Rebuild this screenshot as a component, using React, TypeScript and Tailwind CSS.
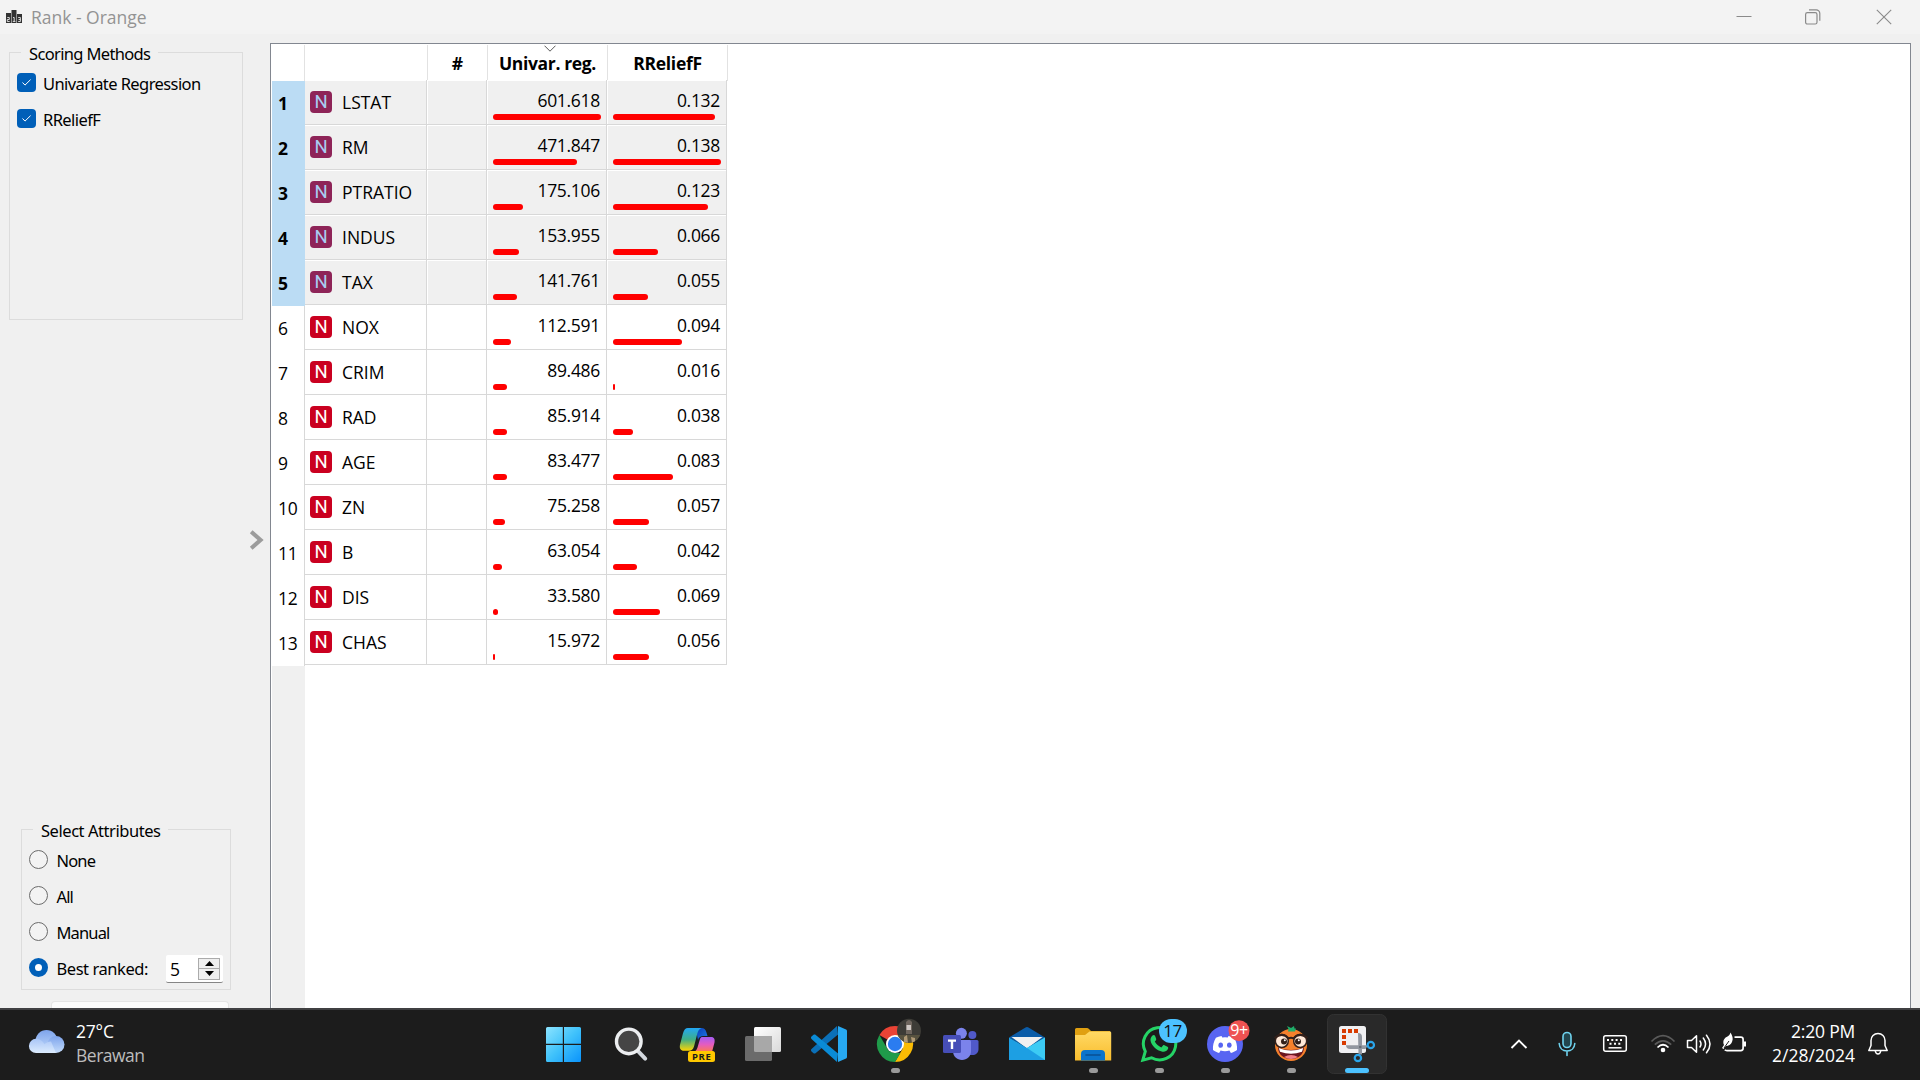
import React from "react";

type Row = { name: string; uni: string; uniBar: number; rel: string; relBar: number };

const rows: Row[] = [
  { name: "LSTAT", uni: "601.618", uniBar: 108, rel: "0.132", relBar: 102 },
  { name: "RM", uni: "471.847", uniBar: 84, rel: "0.138", relBar: 108 },
  { name: "PTRATIO", uni: "175.106", uniBar: 30, rel: "0.123", relBar: 94.5 },
  { name: "INDUS", uni: "153.955", uniBar: 25.5, rel: "0.066", relBar: 45 },
  { name: "TAX", uni: "141.761", uniBar: 24, rel: "0.055", relBar: 34.5 },
  { name: "NOX", uni: "112.591", uniBar: 18, rel: "0.094", relBar: 69 },
  { name: "CRIM", uni: "89.486", uniBar: 13.5, rel: "0.016", relBar: 2 },
  { name: "RAD", uni: "85.914", uniBar: 13.5, rel: "0.038", relBar: 19.5 },
  { name: "AGE", uni: "83.477", uniBar: 13.5, rel: "0.083", relBar: 60 },
  { name: "ZN", uni: "75.258", uniBar: 12, rel: "0.057", relBar: 36 },
  { name: "B", uni: "63.054", uniBar: 9, rel: "0.042", relBar: 24 },
  { name: "DIS", uni: "33.580", uniBar: 4.5, rel: "0.069", relBar: 46.5 },
  { name: "CHAS", uni: "15.972", uniBar: 2, rel: "0.056", relBar: 36 },
];

const SELECTED = 5;

function TitleBar() {
  return (
    <header className="flex h-[34px] shrink-0 items-center bg-[#f3f3f3] pl-[6px]">
      <svg width="16" height="14" viewBox="0 0 16 14" className="mt-[-1px]">
        <path d="M0 3h5v10H0zM5.5 0h5v13h-5zM11 4h5v9h-5z" fill="#333" />
        <g fill="none" stroke="#e8e8e8" strokeWidth="0.9">
          <path d="M1.3 7.5h2v2h-2v2h2.4M7 7.5h1.2v4M6.8 11.4h2.6M12.2 7.5h2.2v4h-2.2M12.6 9.5h1.8" />
        </g>
      </svg>
      <h1 className="ml-[9px] text-[17.5px] leading-6 tracking-[-0.02px] text-[#939393]">Rank - Orange</h1>
      <div className="ml-auto flex items-center pr-[28px] text-[#8a8a8a]">
        <svg width="16" height="16" viewBox="0 0 16 16" fill="none" stroke="currentColor">
          <path d="M0.5 7.5h15" />
        </svg>
        <svg width="16" height="16" viewBox="0 0 16 16" fill="none" stroke="currentColor" strokeWidth="1.2" className="ml-[53px]">
          <rect x="0.6" y="3.6" width="11.4" height="11.4" rx="1.8" />
          <path d="M4 0.8h7.2a3.6 3.6 0 0 1 3.6 3.6v7.4" />
        </svg>
        <svg width="16" height="16" viewBox="0 0 16 16" fill="none" stroke="currentColor" strokeWidth="1.1" className="ml-[55px]">
          <path d="M0.8 0.8l14.4 14.4M15.2 0.8L0.8 15.2" />
        </svg>
      </div>
    </header>
  );
}

function Check({ label }: { label: string }) {
  return (
    <label className="flex h-9 items-center">
      <span className="mt-[-3px] flex size-[19px] items-center justify-center rounded-[4px] bg-[#005fb8]">
        <svg width="9" height="7" viewBox="0 0 9 7" fill="none" stroke="#fff" strokeWidth="1">
          <path d="M0.5 3.5l2.5 2.6L8.6 0.6" />
        </svg>
      </span>
      <span className="ml-[7px] tracking-[-0.58px]">{label}</span>
    </label>
  );
}

function Radio({ label, on }: { label: string; on?: boolean }) {
  return (
    <label className="flex h-9 items-center">
      {on ? (
        <span className="mt-[-3px] size-[19px] rounded-full border-[6px] border-[#005fb8] bg-white" />
      ) : (
        <span className="mt-[-3px] size-[19px] rounded-full border border-[#6b6b6b] bg-[#f3f3f3]" />
      )}
      <span className={"ml-[8.5px] " + (on ? "tracking-[-0.45px]" : "tracking-[-0.85px]")}>{label}</span>
    </label>
  );
}

function SpinBox() {
  return (
    <div className="ml-auto mr-[7px] mt-[4px] flex h-[28px] w-[57px] items-center rounded-[2px] border-b border-[#868686] bg-white pl-[4px] pr-[3px]">
      <span className="text-[17.5px] leading-6 [font-family:'Open_Sans',sans-serif]">5</span>
      <div className="ml-auto flex h-[22px] w-[22px] flex-col border border-[#ababab] bg-[#efefef]">
        <span className="flex flex-1 items-center justify-center border-b border-[#ababab]">
          <svg width="9" height="5" viewBox="0 0 9 5"><path d="M4.5 0L9 5H0z" /></svg>
        </span>
        <span className="flex flex-1 items-center justify-center">
          <svg width="9" height="5" viewBox="0 0 9 5"><path d="M4.5 5L9 0H0z" /></svg>
        </span>
      </div>
    </div>
  );
}

function Sidebar() {
  return (
    <aside className="flex w-[270px] shrink-0 text-[16.5px] leading-6 tracking-[-0.35px] text-black [font-family:'Noto_Sans',sans-serif]">
      <div className="flex w-[243px] flex-col">
        <fieldset className="ml-[9px] mt-[6px] h-[280px] w-[234px] border border-[#dcdcdc] pl-[7px]">
          <legend className="ml-[4px] h-6 px-2 pt-[2px] tracking-[-0.65px]">Scoring Methods</legend>
          <div className="mt-[2px]">
            <Check label="Univariate Regression" />
            <Check label="RReliefF" />
          </div>
        </fieldset>
        <fieldset className="ml-[21px] mt-[497px] h-[173px] w-[210px] border border-[#dcdcdc] pl-[7px]">
          <legend className="ml-[4px] h-6 px-2 pt-[2px] tracking-[-0.45px]">Select Attributes</legend>
          <div className="mt-[2px]">
            <Radio label="None" />
            <Radio label="All" />
            <Radio label="Manual" />
            <div className="flex">
              <Radio label="Best ranked:" on />
              <SpinBox />
            </div>
          </div>
        </fieldset>
        <div className="ml-[51px] mt-[11px] h-[7px] w-[178px] rounded-t-[4px] border border-b-0 border-[#e4e4e4] bg-[#fbfbfb]" />
      </div>
      <div className="flex flex-1 items-center justify-center pt-[37px]">
        <svg width="16" height="20" viewBox="0 0 16 20" fill="none" stroke="#9c9c9c" strokeWidth="4" className="ml-[1px]">
          <path d="M2.2 1.8L11.6 10 2.2 18.2" />
        </svg>
      </div>
    </aside>
  );
}

function ScoreCell({ value, bar, selected }: { value: string; bar: number; selected: boolean }) {
  return (
    <div
      className={
        "flex w-[120px] flex-col justify-end border-r border-b border-[#d8d8d8] pb-[3px] pl-[6px] pr-[6px] " +
        (selected ? "shadow-[inset_1px_1px_0_#fff]" : "")
      }
    >
      <span className="mb-[2px] text-right leading-6 tracking-[-0.3px]">{value}</span>
      <span className="mb-[1px] h-[6px] rounded-[3px] bg-[#ff0000]" style={{ width: bar }} />
    </div>
  );
}

function TableRow({ row, index }: { row: Row; index: number }) {
  const selected = index < SELECTED;
  return (
    <div className="flex h-[45px]">
      <div
        className={
          "flex w-[33px] items-center pb-px pl-[6px] " +
          (selected
            ? "bg-[#bbdcf4] font-bold"
            : "border-r border-[#d8d8d8] bg-white tracking-[-0.3px]")
        }
      >
        {index + 1}
      </div>
      <div className={"-mt-px flex h-[45px] " + (selected ? "bg-[#f0f0f0]" : "bg-white")}>
        <div
          className={
            "flex w-[122px] items-center border-r border-b border-[#d8d8d8] pl-[5px] " +
            (selected ? "shadow-[inset_0_1px_0_#fff]" : "")
          }
        >
          <span
            className={
              "flex size-[22px] items-center justify-center rounded-[4px] pt-px text-[18.5px] leading-none [font-family:Roboto,sans-serif] " +
              (selected ? "bg-[#8e2458] text-[#a9cdf3]" : "bg-[#ca0020] text-white")
            }
          >
            N
          </span>
          <span className="ml-[10px]">{row.name}</span>
        </div>
        <div
          className={
            "w-[60px] border-r border-b border-[#d8d8d8] " + (selected ? "shadow-[inset_1px_1px_0_#fff]" : "")
          }
        />
        <ScoreCell value={row.uni} bar={row.uniBar} selected={selected} />
        <ScoreCell value={row.rel} bar={row.relBar} selected={selected} />
      </div>
    </div>
  );
}

function RankTable() {
  return (
    <main className="mr-[9px] mt-[9px] flex flex-1 flex-col overflow-hidden border border-b-0 border-[#828790] bg-white pl-px text-[17.5px] leading-6 text-black">
      <div className="flex h-[37px] shrink-0 pt-px font-bold">
        <div className="w-[33px] border-r border-[#e2e2e2]" />
        <div className="w-[123px] border-r border-[#e2e2e2]" />
        <div className="flex w-[60px] items-center justify-center border-r border-[#e2e2e2]">#</div>
        <div className="flex w-[120px] flex-col items-center border-r border-[#e2e2e2]">
          <svg width="12" height="7" viewBox="0 0 12 7" fill="none" stroke="#5a5a5a" strokeWidth="1" className="-mb-px ml-[4px]">
            <path d="M0.5 0.7L6 6.2 11.5 0.7" />
          </svg>
          <span className="tracking-[-0.35px]">Univar. reg.</span>
        </div>
        <div className="flex w-[120px] items-center justify-center border-r border-[#e2e2e2] tracking-[-0.3px]">
          RReliefF
        </div>
      </div>
      <div className="shrink-0">
        {rows.map((r, i) => (
          <TableRow key={r.name} row={r} index={i} />
        ))}
      </div>
      <div className="w-[33px] flex-1 bg-[#f0f0f0]" />
    </main>
  );
}

function AppTile({ children, running, active }: { children: React.ReactNode; running?: boolean; active?: boolean }) {
  return (
    <svg width="66" height="70" viewBox="0 0 66 70" className="shrink-0 overflow-visible">
      {active && <rect x="4.5" y="4.5" width="59" height="59" rx="6" fill="#292929" stroke="#323232" />}
      {children}
      {running && <rect x="30" y="58" width="9" height="5" rx="2.5" fill="#9a9a9a" />}
      {active && <rect x="22" y="58" width="24" height="5" rx="2.5" fill="#4cc2ff" />}
    </svg>
  );
}

function Gradient({ id, from, to, mid, v }: { id: string; from: string; to: string; mid?: string; v?: boolean }) {
  return (
    <linearGradient id={id} x1="0" y1="0" x2={v ? "0" : "1"} y2="1">
      <stop offset="0" stopColor={from} />
      {mid && <stop offset="0.5" stopColor={mid} />}
      <stop offset="1" stopColor={to} />
    </linearGradient>
  );
}

function AppIcons() {
  return (
    <div className="flex">
      <AppTile>
        <defs>
          <linearGradient id="win" gradientUnits="userSpaceOnUse" x1="15" y1="17" x2="50" y2="52">
            <stop offset="0" stopColor="#8ce4ff" />
            <stop offset="0.5" stopColor="#40c2fb" />
            <stop offset="1" stopColor="#0a93fb" />
          </linearGradient>
        </defs>
        <path
          fill="url(#win)"
          d="M16.5 17H31.8V33.8H15V18.5Q15 17 16.5 17zM33 17H48.5Q50 17 50 18.5V33.8H33zM15 35H31.8V52H16.5Q15 52 15 50.5zM33 35H50V50.5Q50 52 48.5 52H33z"
        />
      </AppTile>
      <AppTile>
        <path d="M40.8 40.8L48.2 48.6" stroke="#d3d8de" strokeWidth="4" strokeLinecap="round" />
        <circle cx="31.8" cy="31.4" r="12.3" fill="#454545" stroke="#eceef0" strokeWidth="3.4" />
      </AppTile>
      <AppTile>
        <defs>
          <Gradient id="cpa" from="#22a7f5" mid="#3fae86" to="#ffd500" v />
          <Gradient id="cpb" from="#a55cf5" mid="#e45cc0" to="#ff7a4c" v />
          <Gradient id="cpc" from="#0a3fb8" to="#1f7ae8" />
        </defs>
        <path fill="url(#cpc)" d="M34 18h4.500c2.500 0 4 1.500 4.800 4l1.200 4h-4c-3 0-4.500 1-5.500 4l-1-5z" />
        <path fill="url(#cpa)" d="M25 18h13.500c-2.500 1-3.500 3-4.300 6L31 36.500c-1 3-2.500 4.300-5 4.300h-5c-3.500 0-4.700-2.500-4-6l3-11.500c1-3.500 2.500-5.300 5-5.300z" />
        <path fill="url(#cpb)" d="M39.500 27h8.500c3.500 0 4 2.500 3.500 5.500L49 42H28.500c3.500 0 5-1.500 6-4.500l2.500-8.500c.5-1.500 1.300-2 2.500-2z" />
        <rect x="25" y="41" width="27" height="11" rx="2.500" fill="#ffc800" />
        <text x="38.800" y="49.900" textAnchor="middle" fontSize="9.500" fontWeight="700" letterSpacing="0.700" fill="#1a1a1a" fontFamily="Open Sans">PRE</text>
      </AppTile>
      <AppTile>
        <defs><Gradient id="tv" from="#ffffff" to="#d9d9d9" /></defs>
        <rect x="25" y="17" width="27" height="25" rx="1.500" fill="url(#tv)" />
        <rect x="16" y="26" width="27" height="25" rx="1.500" fill="#6b6b6b" />
        <path d="M25 26h18v16H26.500a1.500 1.500 0 0 1-1.500-1.500z" fill="#a8a8a8" />
      </AppTile>
      <AppTile>
        <path d="M43 24.500L20.500 43.200c-.6.500-1.400.5-2 0l-2-1.800c-.7-.7-.7-1.600 0-2.300L42 16z" fill="#0b70b8" />
        <path d="M43 43.500L20.500 24.800c-.6-.5-1.400-.5-2 0l-2 1.800c-.7.7-.7 1.600 0 2.300L42 52z" fill="#0a8bd6" />
        <path d="M43 16l7.500 3.200c1 .4 1.500 1 1.500 2v25.600c0 1-.5 1.600-1.500 2L43 52z" fill="#27a9f2" />
      </AppTile>
      <AppTile running>
        <path d="M34 34L18.400 25a18 18 0 0 1 31.200 0H34z" fill="#ea4335" />
        <path d="M34 25h15.600A18 18 0 0 1 34 52l7.800-13.500z" fill="#fbbc04" />
        <path d="M18.400 25l7.800 13.500c2 3.500 5 4.500 8 4.500h5.200L34 52A18 18 0 0 1 18.400 25z" fill="#1f9b4a" />
        <circle cx="34" cy="34" r="9" fill="#fff" />
        <circle cx="34" cy="34" r="7.200" fill="#2b7cf0" />
        <clipPath id="avatar"><circle cx="48" cy="20.800" r="12" /></clipPath>
        <g clipPath="url(#avatar)">
          <rect x="36" y="8" width="24" height="26" fill="#3d3c37" />
          <rect x="37" y="25" width="23" height="9" fill="#57523f" />
          <path d="M45 12q3-4 6 0v12h-6z" fill="#6f665e" />
          <rect x="45.500" y="15" width="4.500" height="5" fill="#cfc8c4" />
          <path d="M43 27l3-2 1 8h-4zM50 27l4 1v5h-3z" fill="#b09a76" />
        </g>
      </AppTile>
      <AppTile>
        <circle cx="45.400" cy="25" r="4" fill="#5059c9" />
        <path d="M42 30h8q1.500 0 1.500 1.500V39c0 4-3 6-6 6h-3.500z" fill="#5059c9" />
        <circle cx="34.400" cy="23.300" r="5.500" fill="#7b83eb" />
        <path d="M26 30h16.500q1.500 0 1.500 1.500V41c0 5.500-4 9-9 9s-9-3.500-9-9z" fill="#7b83eb" />
        <rect x="16" y="25" width="18" height="18" rx="1.500" fill="#464eb8" />
        <path d="M21 29.500h8v2.200h-2.800V39h-2.400v-7.300H21z" fill="#fff" />
      </AppTile>
      <AppTile>
        <path d="M16 27.500L32.500 17.500q1.500-.9 3 0L52 27.500 34 38z" fill="#0b5ca8" />
        <path d="M18.500 27h31L34 38.500z" fill="#f1f1f1" />
        <path d="M16 27.500L34 38 52 27.500V50H16z" fill="#1d9fe3" />
        <path d="M52 27.500V50L34 38z" fill="#3ccbf4" />
      </AppTile>
      <AppTile running>
        <defs><Gradient id="fold" from="#ffd965" to="#f9bd2d" v /></defs>
        <path d="M17.500 18H28q1 0 2 1l2 2H51v10H16V19.500q0-1.500 1.500-1.500z" fill="#e0a011" />
        <path d="M16 25h10l4.500-3.500H51q1.200 0 1.200 1.200V50.500H16z" fill="url(#fold)" />
        <path d="M22 50.500V44q0-4 4-4h16q4 0 4 4v6.500z" fill="#0b74cc" />
        <path d="M27 45h14" stroke="#0a4f92" strokeWidth="1.600" strokeLinecap="round" />
      </AppTile>
      <AppTile running>
        <path d="M17.800 50.200l2.500-8.800A16.200 16.200 0 1 1 26.500 47.800z" fill="none" stroke="#25d366" strokeWidth="3" />
        <path
          d="M27.500 25.500c.8-.8 2-.8 2.500.3l1.200 3c.2.600 0 1.100-.4 1.600l-1 1.200c1.500 2.800 3.600 4.700 6.500 5.900l1.700-1.900c.4-.5.900-.6 1.400-.4l3.100 1.500c.9.500.9 1.300.4 2.400-1 2.200-3.400 3-5.400 2.600-6-1.200-11.400-6.300-12-11.500-.2-1.800.7-3.500 2-4.700z"
          fill="#25d366"
        />
        <rect x="34" y="9" width="28" height="24" rx="12" fill="#4cc2ff" />
        <text x="47.500" y="27.200" textAnchor="middle" fontSize="17" letterSpacing="-0.500" fill="#111" fontFamily="Open Sans">17</text>
      </AppTile>
      <AppTile running>
        <circle cx="34" cy="34" r="18" fill="#5865f2" />
        <path
          d="M30.500 26c-2 .3-4 .9-5.600 1.700-2.300 3.800-3.300 8-2.900 12.300 2 1.500 4 2.400 6.100 3l1.500-2.400q4.400 1.200 8.800 0l1.500 2.400c2.100-.6 4.100-1.500 6.100-3 .4-4.600-.7-8.800-2.900-12.300-1.600-.8-3.600-1.400-5.600-1.700l-.8 1.500q-2.700-.4-5.400 0z"
          fill="#fff"
        />
        <ellipse cx="29.700" cy="35.200" rx="2.300" ry="2.600" fill="#5865f2" />
        <ellipse cx="38.300" cy="35.200" rx="2.300" ry="2.600" fill="#5865f2" />
        <circle cx="48" cy="20.700" r="10.500" fill="#ee5252" />
        <text x="48" y="26.300" textAnchor="middle" fontSize="16" letterSpacing="-0.500" fill="#fff" fontFamily="Open Sans">9+</text>
      </AppTile>
      <AppTile running>
        <circle cx="34" cy="35" r="16" fill="#f5812c" />
        <path d="M30 16l4 2 3-2 .5 2.500 1.500 0-1 3h-7l.5-2.500z" fill="#1fae6a" />
        <path d="M21 37.500q13 5 26 0c-.5 7.500-6 11.500-13 11.500s-12.500-4-13-11.500z" fill="#6b1620" />
        <path d="M21.800 38q12.200 5 24.400 0l-1.200 3.800q-11 4-22 0z" fill="#fff" />
        <path d="M27 47q7-4 14 0-7 4-14 0z" fill="#f2808a" />
        <circle cx="24.800" cy="31" r="6.500" fill="#ffe9d8" stroke="#33201a" strokeWidth="1.500" />
        <circle cx="43.200" cy="31" r="6.500" fill="#ffe9d8" stroke="#33201a" strokeWidth="1.500" />
        <path d="M17.500 28q8-6.500 14 .5 2.500-1.500 5 0 6-7 14-.5" fill="none" stroke="#33201a" strokeWidth="2" />
        <circle cx="27" cy="31.500" r="3" fill="#33201a" />
        <circle cx="41" cy="31.500" r="3" fill="#33201a" />
        <circle cx="27.800" cy="30.200" r="1" fill="#fff" />
        <circle cx="41.800" cy="30.200" r="1" fill="#fff" />
      </AppTile>
      <AppTile active>
        <rect x="16" y="16" width="27" height="27" rx="2.500" fill="#f0f0f2" />
        <path d="M19 19h4v4h-4zM25 19h4v4h-4zM31 19h4v4h-4zM19 25h4v4h-4zM19 31h4v4h-4z" fill="#d83b01" />
        <path d="M35 23q4 0 4 4v17.500h-3.500zM23 35.300h22l-2.500 3.700H27q-4 0-4-3.700z" fill="#9297a0" />
        <circle cx="37.300" cy="37" r="1.300" fill="#666b73" />
        <circle cx="47.800" cy="35" r="3.200" fill="none" stroke="#2aa5ea" strokeWidth="2.200" />
        <circle cx="34.900" cy="48" r="3.200" fill="none" stroke="#2aa5ea" strokeWidth="2.200" />
      </AppTile>
    </div>
  );
}

function Tray() {
  return (
    <div className="mb-[2px] ml-auto flex items-center text-white">
      <svg width="18" height="12" viewBox="0 0 18 12" fill="none" stroke="currentColor" strokeWidth="1.9">
        <path d="M1.500 10L9 2.500l7.500 7.500" />
      </svg>
      <svg width="18" height="26" viewBox="0 0 18 26" fill="none" stroke="#6fd3ee" strokeWidth="1.600" strokeLinecap="round" className="ml-[30px]">
        <rect x="5" y="1.500" width="8" height="15" rx="4" fill="#22454d" />
        <path d="M1.200 12.500c.3 4.500 3.500 7.500 7.800 7.500s7.500-3 7.800-7.500M9 20v4.500" />
      </svg>
      <svg width="26" height="20" viewBox="0 0 26 20" fill="none" stroke="currentColor" strokeWidth="1.500" className="ml-[26px]">
        <rect x="1.700" y="1.700" width="22.600" height="15.600" rx="2" />
        <path d="M5 6h2M9.300 6h2M13.600 6h2M18 6h2M7.500 9.700h2M12 9.700h2M16.300 9.700h2" strokeWidth="2" />
        <path d="M6.500 13.800h13" />
      </svg>
      <svg width="26" height="20" viewBox="0 0 26 20" fill="none" strokeWidth="1.700" className="ml-[22px]">
        <path d="M1.500 7.500Q13-4 24.500 7.500M4.800 10.700q8.200-7.800 16.400 0" stroke="#5a5a5a" />
        <path d="M7.500 13.500q5.500-5.500 11 0" stroke="#fff" />
        <circle cx="13" cy="16" r="2.300" fill="#fff" />
      </svg>
      <svg width="26" height="22" viewBox="0 0 26 22" fill="none" stroke="currentColor" strokeWidth="1.500" strokeLinejoin="round" strokeLinecap="round" className="ml-[10px]">
        <path d="M1.500 7.500h4l5-4.800v16.600l-5-4.800h-4z" />
        <path d="M14 8q2 3 0 6M17.300 5q4.500 6 0 12M20.500 2.200q7 8.800 0 17.600" />
      </svg>
      <svg width="26" height="22" viewBox="0 0 26 22" fill="none" stroke="currentColor" strokeWidth="1.700" className="mb-[3px] ml-[9px]">
        <path d="M13.500 5.200h6.300q2.300 0 2.300 2.300v8.800q0 2.300-2.300 2.300H6q-1.500 0-2.200-.8" />
        <path d="M22.500 9.500h2.500v5h-2.500z" fill="currentColor" stroke="none" />
        <path d="M9.500.5c2 3.500 3 6 1.500 9.500-1 2.500-3.500 4-6 4L2.500 17 1 16l2-3C1 8.500 4 5.500 6.500 4.500 8 3.800 9 2.500 9.500.5z" fill="currentColor" stroke="none" />
        <path d="M3 16l5-7" stroke="#1c1c1c" strokeWidth="1" />
      </svg>
      <div className="-mt-[2px] ml-[24px] w-[84px] whitespace-nowrap text-right text-[17.5px] leading-6">
        <div className="tracking-[-0.2px]">2:20 PM</div>
        <div>2/28/2024</div>
      </div>
      <svg width="22" height="24" viewBox="0 0 22 24" fill="none" stroke="currentColor" strokeWidth="1.500" strokeLinejoin="round" className="ml-[12px] mr-[31px]">
        <path d="M11 1.500c-4 0-7 3-7 7v5L1.800 18.500h18.400L18 13.500v-5c0-4-3-7-7-7z" />
        <path d="M8.300 19q.5 3 2.700 3t2.700-3" />
      </svg>
    </div>
  );
}

function Taskbar() {
  return (
    <footer className="flex h-[72px] shrink-0 items-center border-t-2 border-[#404042] bg-[#1c1c1c]">
      <div className="mb-[2px] flex w-[531px] items-center pl-[28px]">
        <svg width="38" height="26" viewBox="0 0 38 26" className="-mt-[4px]">
          <defs>
            <Gradient id="cl1" from="#7ea4ec" to="#c4dcfb" v />
            <Gradient id="cl2" from="#a9c6f7" to="#dcebfd" v />
          </defs>
          <circle cx="18.500" cy="12" r="11" fill="url(#cl1)" />
          <circle cx="28" cy="15.500" r="8.500" fill="url(#cl1)" />
          <path d="M8 9.800c4 0 7 2.500 8.500 5.500 2-2 4-2.800 6.500-2.800l5 11.500H8a7 7 0 0 1 0-14.200z" fill="url(#cl2)" />
        </svg>
        <div className="-mt-[2px] ml-[10px] text-[17.500px] leading-6 text-white">
          <div className="tracking-[-0.2px]">27°C</div>
          <div className="tracking-[-0.500px] text-[#bdbdbd]">Berawan</div>
        </div>
      </div>
      <AppIcons />
      <Tray />
    </footer>
  );
}

export default function App() {
  return (
    <div className="flex h-[1080px] w-[1920px] flex-col overflow-hidden bg-[#f0f0f0] [font-family:'Open_Sans','Noto_Sans',sans-serif]">
      <TitleBar />
      <div className="flex min-h-0 flex-1">
        <Sidebar />
        <RankTable />
      </div>
      <Taskbar />
    </div>
  );
}
